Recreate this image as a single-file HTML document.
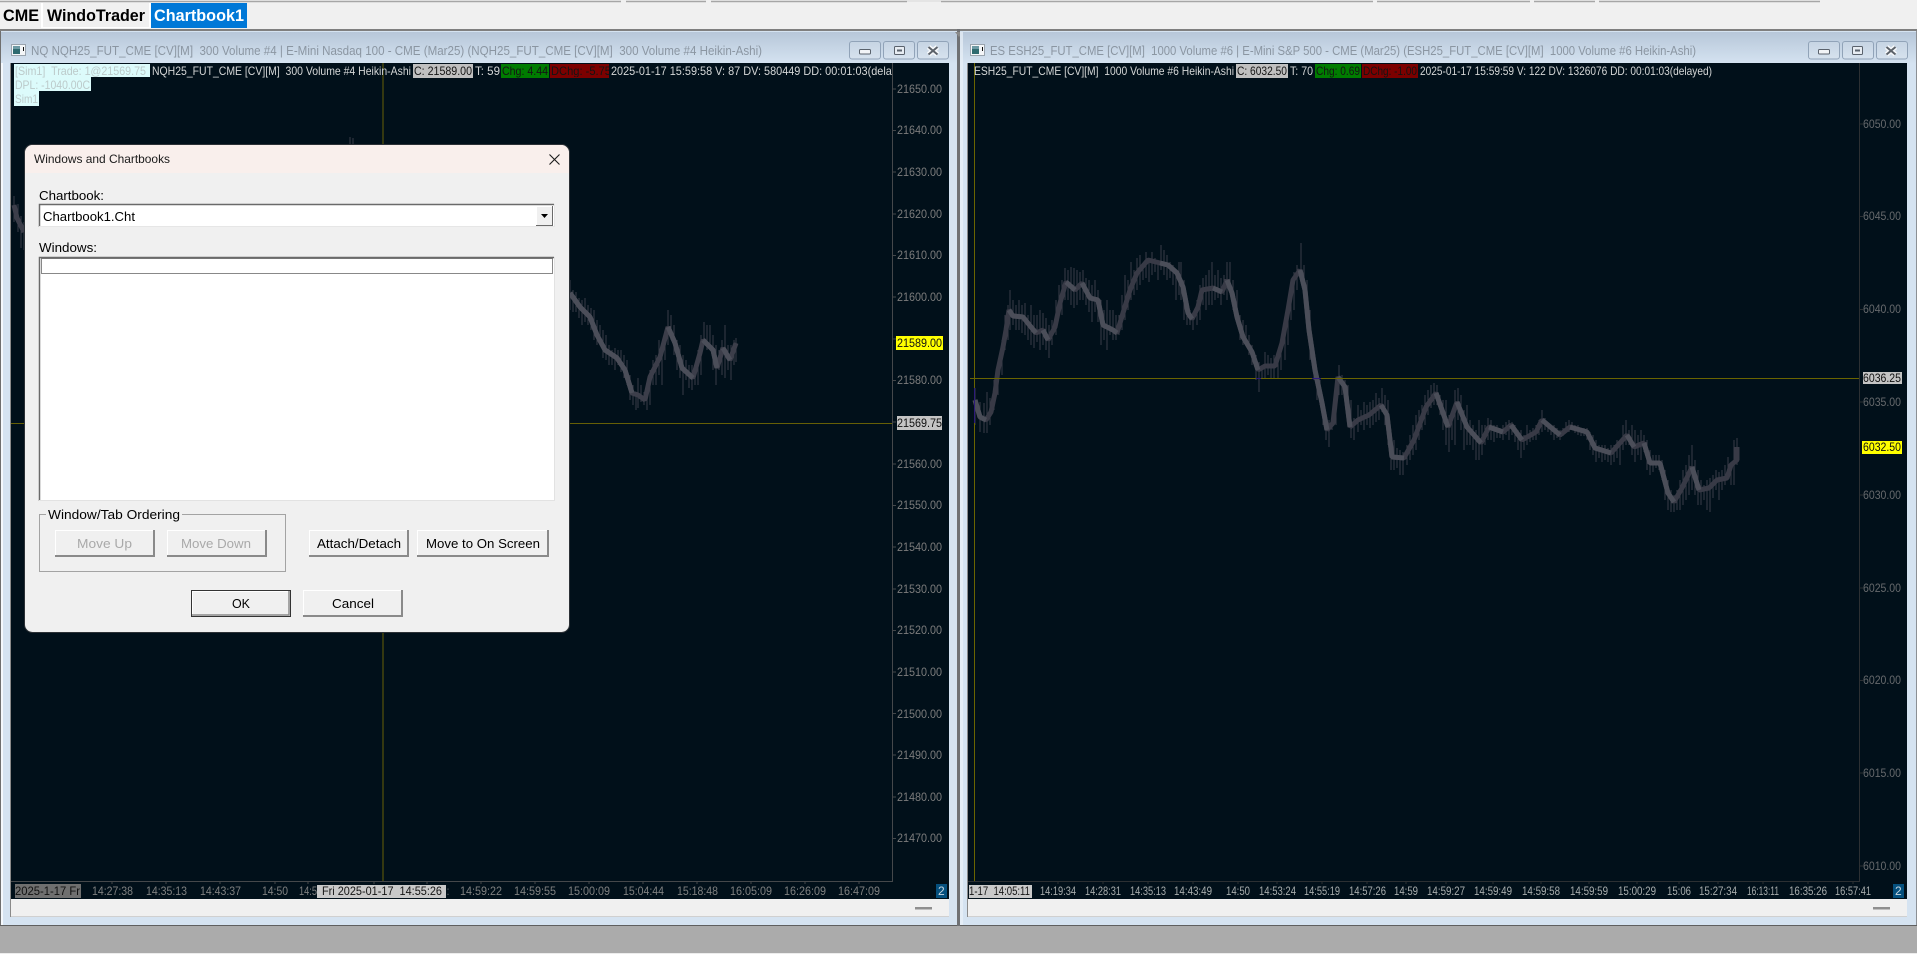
<!DOCTYPE html>
<html><head><meta charset="utf-8"><title>Sierra Chart</title>
<style>
html,body{margin:0;padding:0;background:#f0f0f0;width:1917px;height:954px;overflow:hidden}
svg{display:block}
text{font-family:"Liberation Sans",sans-serif;font-size:12px;white-space:pre}
.p{fill:#7c7c7c}
.q{fill:#66696c}
.t{fill:#7f8080}
.u{fill:#a8adad}
.h{fill:#d4d6d6}
.k{fill:#141414}
.d{fill:#000;font-size:13px}
.w{fill:#a9a9a9;font-size:13px}
.b{font-weight:bold;font-size:16.5px}
.ttl{fill:#8b96a2;font-size:12.5px}
.s{fill:#bccaca}
</style></head><body>
<svg width="1917" height="954" viewBox="0 0 1917 954" xmlns="http://www.w3.org/2000/svg">
<defs>
<linearGradient id="tb" x1="0" y1="0" x2="0" y2="1"><stop offset="0" stop-color="#b7c7d9"/><stop offset="1" stop-color="#d4e2f0"/></linearGradient>
<linearGradient id="bt" x1="0" y1="0" x2="0" y2="1"><stop offset="0" stop-color="#c6d4e3"/><stop offset="1" stop-color="#d6e2ee"/></linearGradient>
<clipPath id="c1"><rect x="11" y="63" width="881" height="30"/></clipPath>
<clipPath id="c2"><rect x="550" y="64" width="59" height="13"/></clipPath>
<g id="ic"><rect x="0.5" y="0.5" width="14" height="11" fill="#f4f6f8" stroke="#9aa4ae"/><rect x="2" y="2" width="7" height="8" fill="#2f6b70"/><rect x="2" y="2" width="7" height="3" fill="#6d9aa4"/><rect x="12" y="3" width="1" height="4" fill="#111"/></g>
<g id="wb"><rect x="0.5" y="0.5" width="31" height="17.500" rx="2.500" fill="url(#bt)" stroke="#91a3b8"/></g>
</defs>

<!-- app background / toolbar -->
<rect width="1917" height="954" fill="#ababab"/>
<rect width="1917" height="29" fill="#f0f0f0"/>
<rect x="0" y="953" width="1917" height="1" fill="#ececec"/>
<path d="M0 1.500H621M626 1.500H706M711 1.500H907M941 1.500H1373M1377 1.500H1530M1534 1.500H1595M1599 1.500H1820" stroke="#a6a6a6" stroke-width="1.500" fill="none"/>
<rect x="907" y="0" width="34" height="2" fill="#e4e4e4"/>
<rect x="41" y="3" width="2" height="25" fill="#fff"/>
<rect x="149" y="3" width="2" height="25" fill="#fff"/>
<rect x="43" y="27" width="106" height="1" fill="#fff"/>
<text class="b" x="3" y="21" textLength="36" lengthAdjust="spacingAndGlyphs" fill="#000">CME</text>
<text class="b" x="47" y="21" textLength="98" lengthAdjust="spacingAndGlyphs" fill="#000">WindoTrader</text>
<rect x="151" y="3" width="96" height="25" fill="#0078d7"/>
<text class="b" x="154" y="21" textLength="90" lengthAdjust="spacingAndGlyphs" fill="#fff">Chartbook1</text>
<rect x="0" y="29" width="1917" height="2" fill="#7f7f7f"/>

<!-- window 1 frame -->
<rect x="0" y="31" width="958" height="894" fill="#d5e3f1"/>
<rect x="0" y="31" width="1" height="894" fill="#6f6f6f"/>
<rect x="1" y="32" width="2" height="893" fill="#f4f8fc"/>
<rect x="1" y="32" width="957" height="31" fill="url(#tb)"/>
<rect x="0" y="925" width="958" height="1" fill="#5f5f5f"/>
<rect x="957" y="29" width="3" height="897" fill="#6f7174"/>
<path d="M955 32h8l-4 5z" fill="#8a8a8a"/>
<use href="#ic" x="11" y="44"/>
<text class="ttl" x="31" y="55" textLength="731" lengthAdjust="spacingAndGlyphs">NQ NQH25_FUT_CME [CV][M]  300 Volume #4 | E-Mini Nasdaq 100 - CME (Mar25) (NQH25_FUT_CME [CV][M]  300 Volume #4 Heikin-Ashi)</text>
<use href="#wb" x="849" y="41"/><use href="#wb" x="883" y="41"/><use href="#wb" x="917" y="41"/>
<rect x="859.500" y="49.500" width="11" height="4.500" rx="1" fill="#f2f4f7" stroke="#5a626c"/>
<rect x="894.500" y="46.500" width="10" height="8" rx="1" fill="#e8edf3" stroke="#5a626c"/><rect x="897" y="49.500" width="5" height="2" fill="#5a626c"/>
<path d="M928.500 47l9 7.500M937.500 47l-9 7.500" stroke="#f7f9fb" stroke-width="5" fill="none"/><path d="M928.500 47l9 7.500M937.500 47l-9 7.500" stroke="#5c626a" stroke-width="2" fill="none"/>

<!-- window 1 chart -->
<rect x="10" y="63" width="939" height="836" fill="#01101a"/>
<rect x="10" y="63" width="1" height="854" fill="#8a8a8a"/>
<rect x="11" y="899" width="938" height="17" fill="#f0f0f0"/>
<rect x="11" y="916" width="938" height="1" fill="#d0d0d0"/>
<rect x="915" y="907" width="17" height="2.500" fill="#8f8f8f"/>
<path d="M892.500 63V881.500H11" stroke="#45484b" fill="none"/>
<path d="M383 63V881M11 423.500H892" stroke="#665f06" fill="none"/>
<path d="M893 89h3M893 130.500h3M893 172h3M893 214h3M893 255.500h3M893 297h3M893 339h3M893 380.500h3M893 422h3M893 464h3M893 505.500h3M893 547h3M893 589h3M893 630.500h3M893 672h3M893 713.500h3M893 755h3M893 797h3M893 838.500h3M112 881v3M166 881v3M220 881v3M275 881v3M308 881v3M374 881v3M427 881v3M481 881v3M535 881v3M589 881v3M643 881v3M697 881v3M751 881v3M805 881v3M859 881v3" stroke="#45484b" fill="none"/>
<text class="p" x="897" y="93" textLength="45" lengthAdjust="spacingAndGlyphs">21650.00</text>
<text class="p" x="897" y="134" textLength="45" lengthAdjust="spacingAndGlyphs">21640.00</text>
<text class="p" x="897" y="176" textLength="45" lengthAdjust="spacingAndGlyphs">21630.00</text>
<text class="p" x="897" y="218" textLength="45" lengthAdjust="spacingAndGlyphs">21620.00</text>
<text class="p" x="897" y="259" textLength="45" lengthAdjust="spacingAndGlyphs">21610.00</text>
<text class="p" x="897" y="301" textLength="45" lengthAdjust="spacingAndGlyphs">21600.00</text>
<text class="p" x="897" y="384" textLength="45" lengthAdjust="spacingAndGlyphs">21580.00</text>
<text class="p" x="897" y="468" textLength="45" lengthAdjust="spacingAndGlyphs">21560.00</text>
<text class="p" x="897" y="509" textLength="45" lengthAdjust="spacingAndGlyphs">21550.00</text>
<text class="p" x="897" y="551" textLength="45" lengthAdjust="spacingAndGlyphs">21540.00</text>
<text class="p" x="897" y="593" textLength="45" lengthAdjust="spacingAndGlyphs">21530.00</text>
<text class="p" x="897" y="634" textLength="45" lengthAdjust="spacingAndGlyphs">21520.00</text>
<text class="p" x="897" y="676" textLength="45" lengthAdjust="spacingAndGlyphs">21510.00</text>
<text class="p" x="897" y="718" textLength="45" lengthAdjust="spacingAndGlyphs">21500.00</text>
<text class="p" x="897" y="759" textLength="45" lengthAdjust="spacingAndGlyphs">21490.00</text>
<text class="p" x="897" y="801" textLength="45" lengthAdjust="spacingAndGlyphs">21480.00</text>
<text class="p" x="897" y="842" textLength="45" lengthAdjust="spacingAndGlyphs">21470.00</text>
<rect x="896" y="336" width="47" height="14" fill="#ffff00"/>
<text x="897" y="347" textLength="45" lengthAdjust="spacingAndGlyphs" fill="#111">21589.00</text>
<rect x="897" y="416" width="45" height="14" fill="#c4c4c4"/>
<text x="897" y="427" textLength="45" lengthAdjust="spacingAndGlyphs" fill="#111">21569.75</text>

<!-- left candles -->
<path d="M14 196V222M18 204V232M21 216V248M24 222V250M350 137V146M353 138V146M570 280V310M573 290V312M576 292V312M579 298V318M582 300V325M585 298V322M588 305V325M591 308V330M594 310V340M597 320V345M600 325V345M603 330V358M606 335V360M609 345V365M612 350V365M615 348V370M618 350V365M621 350V372M624 355V378M627 360V385M630 375V400M633 385V405M636 395V410M638 378V408M641 385V402M644 392V405M647 390V410M650 370V405M653 360V385M656 355V385M659 340V375M662 350V385M665 335V360M668 310V345M671 315V340M674 325V355M677 340V370M680 345V378M683 355V395M686 360V380M689 365V388M692 365V390M695 370V385M698 350V385M701 335V375M704 322V345M707 325V350M710 325V345M713 335V370M716 345V385M719 350V370M722 340V375M725 325V378M728 345V370M731 345V380M734 340V365M736 338V362" stroke="#393c48" fill="none"/>
<path d="M14 205L17 218L24 232M570 293L580 307L590 317L597 335L605 350L617 358L625 370L632 393L638 395L645 400L650 377L660 357L668 327L675 343L682 368L693 378L700 353L703 340L713 350L717 368L723 348L730 360L736 343" stroke="#3c3e4a" stroke-width="5" fill="none" stroke-linejoin="bevel"/>
<path d="M570 293L580 307L590 317L597 335L605 350L617 358L625 370L632 393M668 327L675 343L682 368L693 378M703 340L713 350L717 368M723 348L730 360" stroke="#4b4e59" stroke-width="5" fill="none" stroke-linejoin="bevel"/>

<!-- header left -->
<rect x="14" y="64" width="136" height="13" fill="#dcfbfb"/><rect x="14" y="77" width="77" height="14" fill="#dcfbfb"/><rect x="14" y="91" width="25" height="15" fill="#dcfbfb"/>
<text class="s" x="15" y="75" textLength="131" lengthAdjust="spacingAndGlyphs">[Sim1]  Trade: 1@21569.75</text>
<text class="s" x="15" y="89" textLength="75" lengthAdjust="spacingAndGlyphs">DPL: -1040.00C</text>
<text class="s" x="15" y="103" textLength="23" lengthAdjust="spacingAndGlyphs">Sim1</text>
<text class="h" x="152" y="75" textLength="259" lengthAdjust="spacingAndGlyphs">NQH25_FUT_CME [CV][M]  300 Volume #4 Heikin-Ashi</text>
<rect x="413" y="64" width="60" height="14" fill="#c0c0c0"/>
<text class="k" x="414" y="75" textLength="58" lengthAdjust="spacingAndGlyphs">C: 21589.00</text>
<text class="h" x="475" y="75" textLength="25" lengthAdjust="spacingAndGlyphs">T: 59</text>
<rect x="501" y="64" width="48" height="14" fill="#007c00"/>
<text class="k" x="502" y="75" textLength="46" lengthAdjust="spacingAndGlyphs">Chg: 4.44</text>
<rect x="550" y="64" width="59" height="14" fill="#7c0000"/>
<text class="k" x="551" y="75" textLength="60" lengthAdjust="spacingAndGlyphs" clip-path="url(#c2)">DChg: -5.75</text>
<text class="h" x="611" y="75" textLength="302" lengthAdjust="spacingAndGlyphs" clip-path="url(#c1)">2025-01-17 15:59:58 V: 87 DV: 580449 DD: 00:01:03(delayed)</text>

<!-- time axis left -->
<rect x="15" y="884" width="66" height="14" fill="#6f6f6f"/>
<text x="15" y="895" textLength="65" lengthAdjust="spacingAndGlyphs" fill="#111">2025-1-17 Fr</text>
<text class="t" x="92" y="895" textLength="41" lengthAdjust="spacingAndGlyphs">14:27:38</text>
<text class="t" x="146" y="895" textLength="41" lengthAdjust="spacingAndGlyphs">14:35:13</text>
<text class="t" x="200" y="895" textLength="41" lengthAdjust="spacingAndGlyphs">14:43:37</text>
<text class="t" x="262" y="895" textLength="26" lengthAdjust="spacingAndGlyphs">14:50</text>
<text class="t" x="299" y="895" textLength="18" lengthAdjust="spacingAndGlyphs">14:5</text>
<text class="t" x="447" y="895" textLength="2" lengthAdjust="spacingAndGlyphs">:</text>
<rect x="317" y="885" width="129" height="13" fill="#c9c9c9"/>
<text class="k" x="322" y="895" textLength="120" lengthAdjust="spacingAndGlyphs">Fri 2025-01-17  14:55:26</text>
<text class="t" x="460" y="895" textLength="42" lengthAdjust="spacingAndGlyphs">14:59:22</text>
<text class="t" x="514" y="895" textLength="42" lengthAdjust="spacingAndGlyphs">14:59:55</text>
<text class="t" x="568" y="895" textLength="42" lengthAdjust="spacingAndGlyphs">15:00:09</text>
<text class="t" x="623" y="895" textLength="41" lengthAdjust="spacingAndGlyphs">15:04:44</text>
<text class="t" x="677" y="895" textLength="41" lengthAdjust="spacingAndGlyphs">15:18:48</text>
<text class="t" x="730" y="895" textLength="42" lengthAdjust="spacingAndGlyphs">16:05:09</text>
<text class="t" x="784" y="895" textLength="42" lengthAdjust="spacingAndGlyphs">16:26:09</text>
<text class="t" x="838" y="895" textLength="42" lengthAdjust="spacingAndGlyphs">16:47:09</text>
<rect x="936" y="884" width="11" height="14" fill="#05507e"/>
<text x="938" y="895" fill="#c7d6e0">2</text>

<!-- window 2 frame -->
<rect x="960" y="31" width="957" height="894" fill="#d5e3f1"/>
<rect x="960" y="32" width="957" height="31" fill="url(#tb)"/>
<rect x="960" y="32" width="3" height="893" fill="#e9f1f8" opacity=".7"/>
<rect x="960" y="925" width="957" height="1" fill="#5f5f5f"/>
<rect x="1916" y="31" width="1" height="894" fill="#8b8f94"/>
<use href="#ic" x="970" y="44"/>
<text class="ttl" x="990" y="55" textLength="706" lengthAdjust="spacingAndGlyphs">ES ESH25_FUT_CME [CV][M]  1000 Volume #6 | E-Mini S&amp;P 500 - CME (Mar25) (ESH25_FUT_CME [CV][M]  1000 Volume #6 Heikin-Ashi)</text>
<use href="#wb" x="1808" y="41"/><use href="#wb" x="1842" y="41"/><use href="#wb" x="1876" y="41"/>
<rect x="1818.500" y="49.500" width="11" height="4.500" rx="1" fill="#f2f4f7" stroke="#5a626c"/>
<rect x="1852.500" y="46.500" width="10" height="8" rx="1" fill="#e8edf3" stroke="#5a626c"/><rect x="1855" y="49.500" width="5" height="2" fill="#5a626c"/>
<path d="M1886.500 47l9 7.500M1895.500 47l-9 7.500" stroke="#f7f9fb" stroke-width="5" fill="none"/><path d="M1886.500 47l9 7.500M1895.500 47l-9 7.500" stroke="#5c626a" stroke-width="2" fill="none"/>

<!-- window 2 chart -->
<rect x="968" y="63" width="939" height="836" fill="#01101a"/>
<rect x="967" y="63" width="1" height="854" fill="#8a8a8a"/>
<rect x="968" y="899" width="939" height="17" fill="#f0f0f0"/>
<rect x="968" y="916" width="939" height="1" fill="#d0d0d0"/>
<rect x="1873" y="907" width="17" height="2.500" fill="#8f8f8f"/>
<path d="M1859.500 63V881.500H968" stroke="#2c3033" fill="none"/>
<path d="M1860 124h3M1860 216.500h3M1860 309.500h3M1860 402h3M1860 495h3M1860 588h3M1860 680.500h3M1860 773h3M1860 866h3M1058 881v3M1103 881v3M1148 881v3M1193 881v3M1238 881v3M1277 881v3M1322 881v3M1367 881v3M1406 881v3M1446 881v3M1493 881v3M1541 881v3M1589 881v3M1637 881v3M1679 881v3M1718 881v3M1763 881v3M1808 881v3M1853 881v3" stroke="#2c3033" fill="none"/>
<text class="q" x="1863" y="128" textLength="38" lengthAdjust="spacingAndGlyphs">6050.00</text>
<text class="q" x="1863" y="220" textLength="38" lengthAdjust="spacingAndGlyphs">6045.00</text>
<text class="q" x="1863" y="313" textLength="38" lengthAdjust="spacingAndGlyphs">6040.00</text>
<text class="q" x="1863" y="406" textLength="38" lengthAdjust="spacingAndGlyphs">6035.00</text>
<text class="q" x="1863" y="499" textLength="38" lengthAdjust="spacingAndGlyphs">6030.00</text>
<text class="q" x="1863" y="592" textLength="38" lengthAdjust="spacingAndGlyphs">6025.00</text>
<text class="q" x="1863" y="684" textLength="38" lengthAdjust="spacingAndGlyphs">6020.00</text>
<text class="q" x="1863" y="777" textLength="38" lengthAdjust="spacingAndGlyphs">6015.00</text>
<text class="q" x="1863" y="870" textLength="38" lengthAdjust="spacingAndGlyphs">6010.00</text>
<rect x="1863" y="372" width="39" height="12" fill="#c4c4c4"/>
<text x="1863" y="382" textLength="38" lengthAdjust="spacingAndGlyphs" fill="#111">6036.25</text>
<rect x="1862" y="441" width="40" height="13" fill="#ffff00"/>
<text x="1863" y="451" textLength="38" lengthAdjust="spacingAndGlyphs" fill="#111">6032.50</text>

<!-- right candles -->
<path d="M975 388V425M980 402V432M984 403V433M987 392V433M990 398V425M994 380V410M998 372V395M1002 340V375M1005 315V350M1008 305V340M1010 290V330M1013 300V325M1016 305V330M1019 300V330M1022 305V333M1025 303V335M1028 315V340M1031 305V345M1034 315V348M1037 315V342M1040 310V350M1043 313V345M1046 318V350M1049 325V358M1052 320V345M1056 300V335M1059 285V318M1062 280V315M1065 268V300M1068 270V300M1071 267V305M1074 268V308M1077 270V305M1080 272V300M1083 270V300M1086 278V305M1089 280V312M1092 285V322M1095 280V312M1098 290V322M1101 300V345M1104 310V340M1107 300V350M1110 310V335M1113 310V340M1116 315V340M1119 315V335M1122 295V330M1125 275V320M1128 280V310M1131 262V300M1134 270V295M1137 258V290M1140 255V285M1143 263V280M1146 252V278M1149 262V282M1152 252V275M1155 258V272M1158 260V280M1161 245V270M1164 250V275M1167 255V280M1170 262V278M1173 265V285M1176 270V300M1179 262V295M1181 262V300M1184 280V320M1187 300V325M1190 310V325M1193 315V330M1197 300V325M1200 285V320M1203 278V305M1206 275V310M1209 270V305M1212 262V305M1215 275V300M1218 270V298M1221 278V305M1224 275V295M1227 262V300M1230 262V290M1233 280V310M1237 290V325M1240 315V340M1243 320V345M1246 325V345M1249 335V355M1252 345V365M1256 355V380M1259 362V392M1262 370V378M1265 352V378M1268 355V375M1271 358V378M1274 355V378M1278 360V378M1281 345V370M1285 325V360M1288 305V345M1291 285V320M1294 272V310M1297 265V290M1301 243V270M1304 265V300M1307 280V320M1310 310V360M1314 355V380M1317 370V400M1320 380V405M1323 400V425M1326 415V440M1329 420V447M1332 418V430M1336 395V425M1339 365V395M1342 375V395M1345 380V395M1348 385V420M1351 400V438M1354 418V440M1358 405V432M1361 410V425M1364 402V430M1367 405V425M1370 402V428M1373 400V425M1376 393V422M1379 398V420M1382 388V412M1385 395V425M1388 400V445M1391 430V470M1394 440V470M1397 448V468M1400 450V475M1403 452V475M1407 445V465M1410 435V460M1413 425V455M1416 415V450M1419 410V440M1422 405V430M1425 395V425M1428 390V415M1431 385V408M1434 383V405M1437 385V405M1440 395V415M1443 400V430M1446 400V445M1449 415V452M1452 410V440M1455 390V445M1458 388V420M1461 395V430M1464 410V450M1467 405V445M1470 420V445M1473 425V450M1476 430V460M1479 420V460M1482 425V455M1485 425V445M1488 418V440M1491 420V440M1494 425V442M1497 425V438M1500 428V438M1503 425V440M1506 422V435M1509 420V440M1512 422V435M1515 425V442M1518 430V450M1521 430V458M1524 435V450M1527 425V445M1530 430V442M1533 428V440M1536 425V440M1539 420V435M1542 410V432M1545 418V430M1548 422V432M1551 425V435M1554 425V440M1557 428V438M1560 430V440M1563 428V436M1566 422V432M1569 420V432M1572 422V430M1575 425V433M1578 425V435M1581 428V436M1584 428V436M1587 428V440M1590 432V450M1593 435V455M1596 440V462M1599 445V458M1602 445V462M1605 445V460M1608 448V462M1611 445V465M1614 445V462M1617 440V458M1620 440V465M1623 425V450M1626 420V445M1629 430V445M1632 425V455M1635 430V462M1638 435V455M1641 430V460M1644 435V452M1647 440V470M1650 450V475M1653 455V472M1656 455V468M1659 455V470M1662 460V480M1665 470V500M1668 480V510M1671 490V512M1674 495V512M1677 490V510M1680 480V510M1683 470V505M1686 465V500M1689 455V495M1692 445V490M1695 460V495M1698 470V505M1701 480V505M1704 485V500M1707 480V510M1710 478V512M1713 475V498M1716 470V490M1719 472V500M1722 470V490M1725 465V485M1728 457V480M1731 462V485M1734 440V485M1737 438V465" stroke="#393c48" fill="none"/>
<path d="M975 400L980 417L986 420L991 412L995 393L998 370L1003 347L1006 330L1009 310L1013 316L1023 317L1031 327L1036 333L1043 330L1048 340L1055 327L1060 303L1066 282L1075 290L1082 283L1090 298L1098 300L1103 325L1113 330L1117 333L1123 313L1130 290L1137 273L1148 260L1160 263L1168 265L1177 273L1183 287L1188 313L1192 319L1198 307L1202 290L1213 288L1222 292L1227 280L1232 293L1237 317L1243 337L1252 352L1258 370L1265 366L1275 366L1282 343L1288 310L1293 280L1300 270L1305 290L1309 330L1315 370L1322 403L1327 430L1333 423L1338 377L1345 387L1350 427L1358 420L1369 415L1381 405L1387 415L1392 457L1404 458L1414 440L1426 407L1436 393L1448 427L1457 402L1467 427L1481 443L1489 427L1503 432L1511 425L1522 440L1536 432L1542 420L1560 435L1570 427L1587 432L1595 448L1611 453L1627 435L1634 447L1644 443L1650 463L1660 463L1668 493L1674 502L1682 488L1692 467L1699 490L1709 488L1717 480L1727 478L1731 465L1737 460L1737 447" stroke="#383a46" stroke-width="5" fill="none" stroke-linejoin="bevel"/>
<path d="M975 400L980 417L986 420M1009 310L1013 316L1023 317L1031 327L1036 333M1043 330L1048 340M1066 282L1075 290M1082 283L1090 298L1098 300L1103 325L1113 330L1117 333M1160 263L1168 265L1177 273L1183 287L1188 313L1192 319M1213 288L1222 292M1227 280L1232 293L1237 317L1243 337L1252 352L1258 370M1300 270L1305 290L1309 330L1315 370L1322 403L1327 430M1338 377L1345 387L1350 427M1381 405L1387 415L1392 457L1404 458M1436 393L1448 427M1457 402L1467 427L1481 443M1489 427L1503 432M1511 425L1522 440M1542 420L1560 435M1570 427L1587 432L1595 448L1611 453M1627 435L1634 447M1644 443L1650 463L1660 463L1668 493L1674 502M1692 467L1699 490" stroke="#4b4e59" stroke-width="5" fill="none" stroke-linejoin="bevel"/>
<path d="M970 378.500H1859M974.500 63V881" stroke="#6a6400" fill="none"/>
<path d="M974.500 388V423" stroke="#2d1a7a" fill="none"/>
<path d="M1256 378.500h5M1312 378.500h9" stroke="#2d1a7a" fill="none"/>

<!-- header right -->
<text class="h" x="974" y="75" textLength="260" lengthAdjust="spacingAndGlyphs">ESH25_FUT_CME [CV][M]  1000 Volume #6 Heikin-Ashi</text>
<rect x="1236" y="64" width="52" height="14" fill="#c0c0c0"/>
<text class="k" x="1237" y="75" textLength="50" lengthAdjust="spacingAndGlyphs">C: 6032.50</text>
<text class="h" x="1290" y="75" textLength="23" lengthAdjust="spacingAndGlyphs">T: 70</text>
<rect x="1315" y="64" width="46" height="14" fill="#007c00"/>
<text class="k" x="1316" y="75" textLength="44" lengthAdjust="spacingAndGlyphs">Chg: 0.69</text>
<rect x="1362" y="64" width="56" height="14" fill="#7c0000"/>
<text class="k" x="1363" y="75" textLength="54" lengthAdjust="spacingAndGlyphs">DChg: -1.00</text>
<text class="h" x="1420" y="75" textLength="292" lengthAdjust="spacingAndGlyphs">2025-01-17 15:59:59 V: 122 DV: 1326076 DD: 00:01:03(delayed)</text>

<!-- time axis right -->
<rect x="969" y="885" width="63" height="13" fill="#c9c9c9"/>
<text class="k" x="969" y="895" textLength="61" lengthAdjust="spacingAndGlyphs">1-17  14:05:11</text>
<text class="u" x="1040" y="895" textLength="36" lengthAdjust="spacingAndGlyphs">14:19:34</text>
<text class="u" x="1085" y="895" textLength="36" lengthAdjust="spacingAndGlyphs">14:28:31</text>
<text class="u" x="1130" y="895" textLength="36" lengthAdjust="spacingAndGlyphs">14:35:13</text>
<text class="u" x="1174" y="895" textLength="38" lengthAdjust="spacingAndGlyphs">14:43:49</text>
<text class="u" x="1226" y="895" textLength="24" lengthAdjust="spacingAndGlyphs">14:50</text>
<text class="u" x="1259" y="895" textLength="37" lengthAdjust="spacingAndGlyphs">14:53:24</text>
<text class="u" x="1304" y="895" textLength="36" lengthAdjust="spacingAndGlyphs">14:55:19</text>
<text class="u" x="1349" y="895" textLength="37" lengthAdjust="spacingAndGlyphs">14:57:26</text>
<text class="u" x="1394" y="895" textLength="24" lengthAdjust="spacingAndGlyphs">14:59</text>
<text class="u" x="1427" y="895" textLength="38" lengthAdjust="spacingAndGlyphs">14:59:27</text>
<text class="u" x="1474" y="895" textLength="38" lengthAdjust="spacingAndGlyphs">14:59:49</text>
<text class="u" x="1522" y="895" textLength="38" lengthAdjust="spacingAndGlyphs">14:59:58</text>
<text class="u" x="1570" y="895" textLength="38" lengthAdjust="spacingAndGlyphs">14:59:59</text>
<text class="u" x="1618" y="895" textLength="38" lengthAdjust="spacingAndGlyphs">15:00:29</text>
<text class="u" x="1667" y="895" textLength="24" lengthAdjust="spacingAndGlyphs">15:06</text>
<text class="u" x="1699" y="895" textLength="38" lengthAdjust="spacingAndGlyphs">15:27:34</text>
<text class="u" x="1747" y="895" textLength="32" lengthAdjust="spacingAndGlyphs">16:13:11</text>
<text class="u" x="1789" y="895" textLength="38" lengthAdjust="spacingAndGlyphs">16:35:26</text>
<text class="u" x="1835" y="895" textLength="36" lengthAdjust="spacingAndGlyphs">16:57:41</text>
<rect x="1893" y="884" width="11" height="14" fill="#05507e"/>
<text x="1895" y="895" fill="#c7d6e0">2</text>

<!-- dialog -->
<rect x="24.500" y="144.500" width="545" height="488" rx="8" fill="#f0f0f0" stroke="#2c3136"/>
<path d="M25 173V153a8 8 0 0 1 8-8H561a8 8 0 0 1 8 8V173Z" fill="#f9efec"/>
<text x="34" y="163" textLength="136" lengthAdjust="spacingAndGlyphs" fill="#1a1a1a">Windows and Chartbooks</text>
<path d="M549.500 154.500l10 10M559.500 154.500l-10 10" stroke="#1a1a1a" stroke-width="1.100" fill="none"/>

<text class="d" x="39" y="200" textLength="65" lengthAdjust="spacingAndGlyphs">Chartbook:</text>
<rect x="39" y="204" width="515" height="23" fill="#fff"/>
<path d="M39.500 227V204.500H554" stroke="#6a6a6a" stroke-width="1.500" fill="none"/>
<path d="M39 226.500H554.500V204" stroke="#e6e6e6" fill="none"/>
<text class="d" x="43" y="221" textLength="92" lengthAdjust="spacingAndGlyphs">Chartbook1.Cht</text>
<rect x="536" y="206" width="17" height="20" fill="#f0f0f0"/>
<path d="M536.500 226V206.500H553" stroke="#fff" fill="none"/><path d="M536 225.500H552.500V206" stroke="#6a6a6a" fill="none"/>
<path d="M541 214h7l-3.500 4z" fill="#000"/>

<text class="d" x="39" y="252" textLength="58" lengthAdjust="spacingAndGlyphs">Windows:</text>
<rect x="39" y="257" width="515" height="244" fill="#fff"/>
<path d="M39.500 501V257.500H554" stroke="#6a6a6a" stroke-width="1.500" fill="none"/>
<path d="M39 500.500H554.500V257" stroke="#e2e2e2" fill="none"/>
<rect x="41.500" y="258.500" width="511" height="15" fill="none" stroke="#111" stroke-dasharray="1 1"/>

<rect x="39.500" y="514.500" width="246" height="57" fill="none" stroke="#a3a3a3"/>
<rect x="46" y="508" width="136" height="14" fill="#f0f0f0"/>
<text class="d" x="48" y="519" textLength="132" lengthAdjust="spacingAndGlyphs">Window/Tab Ordering</text>

<path d="M55.500 556V530.500H155" stroke="#fff" fill="none"/><path d="M55 556H154V530" stroke="#8a8a8a" stroke-width="2" fill="none"/>
<text class="w" x="77" y="548" textLength="55" lengthAdjust="spacingAndGlyphs">Move Up</text>
<path d="M167.500 556V530.500H267" stroke="#fff" fill="none"/><path d="M167 556H266V530" stroke="#8a8a8a" stroke-width="2" fill="none"/>
<text class="w" x="181" y="548" textLength="70" lengthAdjust="spacingAndGlyphs">Move Down</text>
<path d="M309.500 556V530.500H409" stroke="#fff" fill="none"/><path d="M309 556H408V530" stroke="#8a8a8a" stroke-width="2" fill="none"/>
<text class="d" x="317" y="548" textLength="84" lengthAdjust="spacingAndGlyphs">Attach/Detach</text>
<path d="M417.500 556V530.500H549" stroke="#fff" fill="none"/><path d="M417 556H548V530" stroke="#8a8a8a" stroke-width="2" fill="none"/>
<text class="d" x="426" y="548" textLength="114" lengthAdjust="spacingAndGlyphs">Move to On Screen</text>

<rect x="191.500" y="590.500" width="99" height="26" fill="none" stroke="#333"/>
<path d="M192.500 615V591.500H290" stroke="#fff" fill="none"/><path d="M192 615H289V591" stroke="#8a8a8a" stroke-width="1.500" fill="none"/>
<text class="d" x="232" y="608" textLength="18" lengthAdjust="spacingAndGlyphs">OK</text>
<path d="M303.500 616V590.500H403" stroke="#fff" fill="none"/><path d="M303 616H402V590" stroke="#8a8a8a" stroke-width="2" fill="none"/>
<text class="d" x="332" y="608" textLength="42" lengthAdjust="spacingAndGlyphs">Cancel</text>
</svg>
</body></html>
